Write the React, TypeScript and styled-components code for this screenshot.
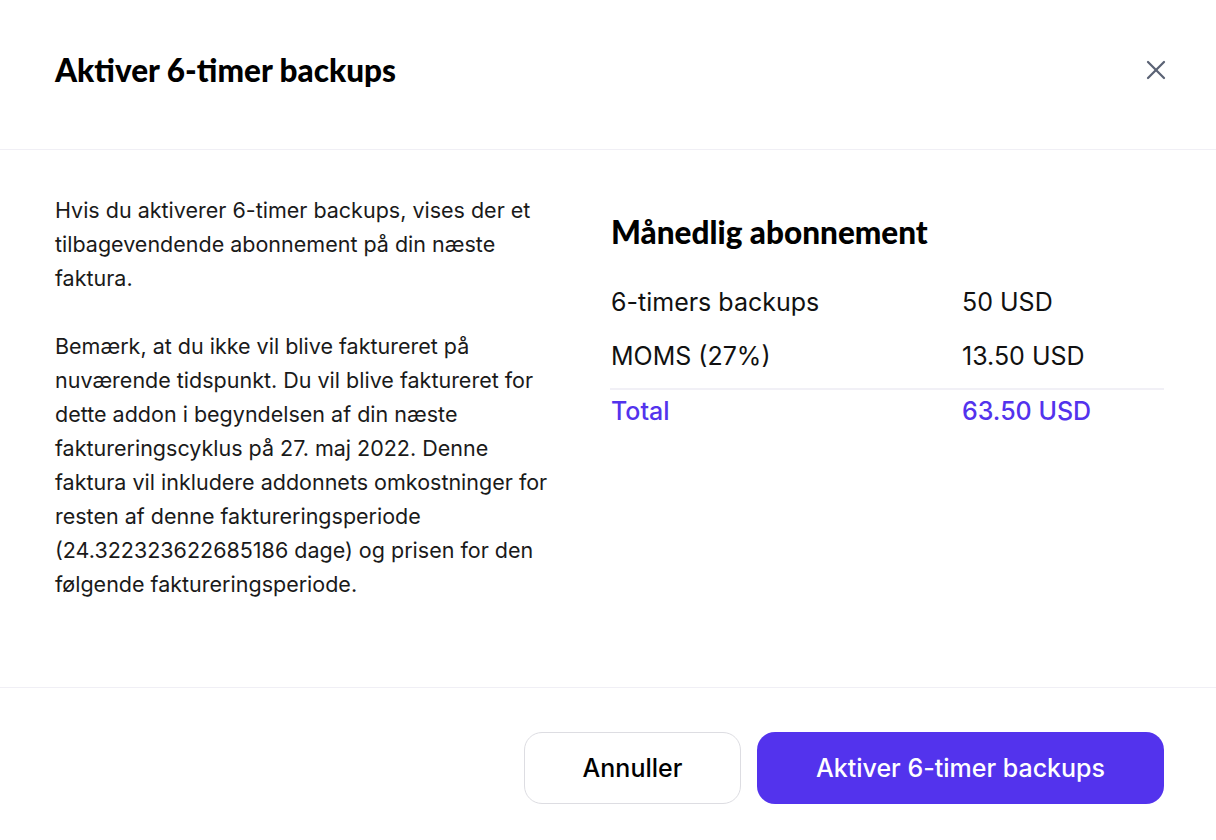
import styled, { createGlobalStyle } from 'styled-components';
import { X } from 'lucide-react';

const GlobalStyle = createGlobalStyle`
    html, body {
        margin: 0;
        padding: 0;
        background: #ffffff;
    }
    body {
        font-family: 'Inter', 'Liberation Sans', sans-serif;
        color: #1a1a1a;
    }
`;

const Modal = styled.div`
    width: 1216px;
    height: 840px;
    display: flex;
    flex-direction: column;
    background-color: #ffffff;
`;

const Header = styled.div`
    height: 150px;
    box-sizing: border-box;
    padding: 0 40px 10px 55px;
    display: flex;
    align-items: center;
    justify-content: space-between;
    border-bottom: 1px solid #f0eff5;
`;

const Title = styled.h1`
    margin: 0;
    font-family: 'Lato', 'Liberation Sans', sans-serif;
    font-size: 31.5px;
    font-weight: 900;
    color: #000;
`;

const CloseButton = styled.button`
    width: 40px;
    height: 40px;
    display: flex;
    align-items: center;
    justify-content: center;
    background: none;
    border: none;
    padding: 0;
    color: #5b6375;
    cursor: pointer;
`;

const Body = styled.div`
    flex: 1;
    display: grid;
    grid-template-columns: 500px 1fr;
    column-gap: 55px;
    padding: 43px 52px 0 55px;
    border-bottom: 1px solid #f0eff5;
`;

const Paragraph = styled.p`
    margin: 0 0 34px 0;
    font-size: 21.5px;
    line-height: 34px;
    color: #1a1a1a;
`;

const Summary = styled.div`
    padding-top: 20px;
`;

const SummaryTitle = styled.h2`
    margin: 0 0 24px 1px;
    font-family: 'Lato', 'Liberation Sans', sans-serif;
    font-size: 31.5px;
    font-weight: 900;
    color: #000;
`;

const Row = styled.div<{ $total?: boolean }>`
    display: grid;
    grid-template-columns: 351px 1fr;
    height: ${p => (p.$total ? '42px' : '54px')};
    margin-top: ${p => (p.$total ? '5px' : '0')};
    align-items: center;
    padding-left: 1px;
    font-size: 25px;
    font-weight: ${p => (p.$total ? 500 : 400)};
    color: ${p => (p.$total ? '#5333ed' : '#111')};
    border-top: ${p => (p.$total ? '2px solid #f1f0f6' : 'none')};
`;

const Footer = styled.div`
    height: 152px;
    box-sizing: border-box;
    padding: 8px 52px 0 0;
    display: flex;
    align-items: center;
    justify-content: flex-end;
    gap: 16px;
`;

const Button = styled.button<{ $primary?: boolean }>`
    height: 72px;
    box-sizing: border-box;
    border-radius: 18px;
    font-family: 'Inter', 'Liberation Sans', sans-serif;
    font-size: 25px;
    font-weight: 500;
    cursor: pointer;
    width: ${p => (p.$primary ? '407px' : '217px')};
    background-color: ${p => (p.$primary ? '#5333ed' : '#ffffff')};
    color: ${p => (p.$primary ? '#ffffff' : '#000000')};
    border: ${p => (p.$primary ? 'none' : '1px solid #dddde2')};
`;

export default function App() {
    return (
        <>
            <GlobalStyle />
            <Modal>
                <Header>
                    <Title>Aktiver 6-timer backups</Title>
                    <CloseButton aria-label="Luk">
                        <X size={32} strokeWidth={1.7} />
                    </CloseButton>
                </Header>
                <Body>
                    <div>
                        <Paragraph>
                            Hvis du aktiverer 6-timer backups, vises der et tilbagevendende abonnement på din næste faktura.
                        </Paragraph>
                        <Paragraph>
                            Bemærk, at du ikke vil blive faktureret på nuværende tidspunkt. Du vil blive faktureret for dette addon i begyndelsen af din næste faktureringscyklus på 27. maj 2022. Denne faktura vil inkludere addonnets omkostninger for resten af denne faktureringsperiode (24.322323622685186 dage) og prisen for den følgende faktureringsperiode.
                        </Paragraph>
                    </div>
                    <Summary>
                        <SummaryTitle>Månedlig abonnement</SummaryTitle>
                        <Row>
                            <span>6-timers backups</span>
                            <span>50 USD</span>
                        </Row>
                        <Row>
                            <span>MOMS (27%)</span>
                            <span>13.50 USD</span>
                        </Row>
                        <Row $total>
                            <span>Total</span>
                            <span>63.50 USD</span>
                        </Row>
                    </Summary>
                </Body>
                <Footer>
                    <Button>Annuller</Button>
                    <Button $primary>Aktiver 6-timer backups</Button>
                </Footer>
            </Modal>
        </>
    );
}
